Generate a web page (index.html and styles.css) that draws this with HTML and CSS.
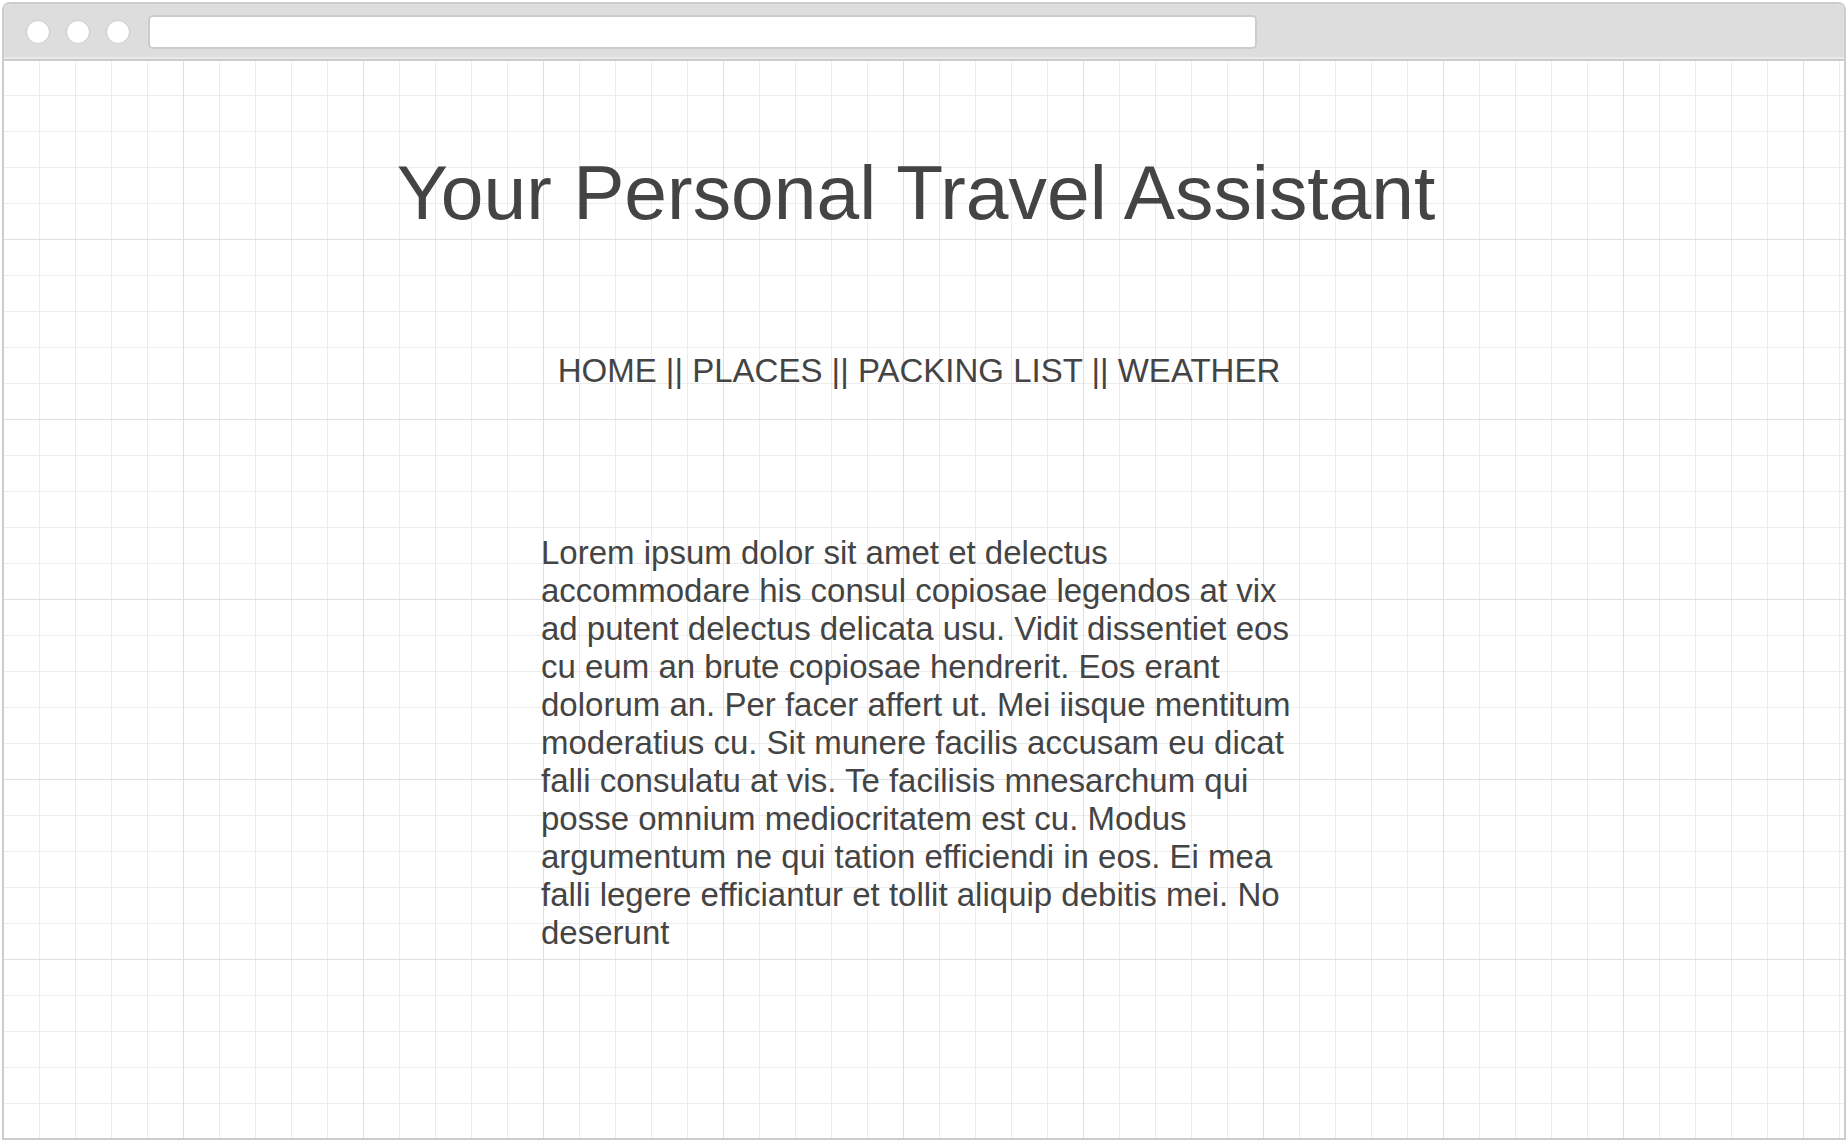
FILE: index.html
```html
<!DOCTYPE html>
<html lang="en">
<head>
<meta charset="utf-8">
<title>Your Personal Travel Assistant</title>
<link rel="stylesheet" href="styles.css">
</head>
<body>
<div class="window">
  <div class="titlebar">
    <span class="dot"></span>
    <span class="dot"></span>
    <span class="dot"></span>
    <div class="address"></div>
  </div>
  <main class="canvas">
    <h1 class="title">Your Personal Travel Assistant</h1>
    <nav class="nav">HOME || PLACES || PACKING LIST || WEATHER</nav>
    <p class="body-text">Lorem ipsum dolor sit amet et delectus accommodare his consul copiosae legendos at vix ad putent delectus delicata usu. Vidit dissentiet eos cu eum an brute copiosae hendrerit. Eos erant dolorum an. Per facer affert ut. Mei iisque mentitum moderatius cu. Sit munere facilis accusam eu dicat falli consulatu at vis. Te facilisis mnesarchum qui posse omnium mediocritatem est cu. Modus argumentum ne qui tation efficiendi in eos. Ei mea falli legere efficiantur et tollit aliquip debitis mei. No deserunt</p>
  </main>
</div>
</body>
</html>
```

FILE: styles.css
```css
html, body {
  margin: 0;
  padding: 0;
  background: #ffffff;
}

body {
  font-family: "Liberation Sans", Arial, sans-serif;
  color: #444444;
}

.window {
  box-sizing: border-box;
  margin: 2px;
  width: 1844px;
  height: 1138px;
  border: 2px solid #cccccc;
  border-radius: 8px 8px 0 0;
  display: flex;
  flex-direction: column;
  overflow: hidden;
}

.titlebar {
  box-sizing: border-box;
  height: 55px;
  padding: 3px 0 0 22px;
  background: #dddddd;
  border-bottom: 2px solid #e9e9e9;
  display: flex;
  align-items: center;
  flex-shrink: 0;
}

.dot {
  box-sizing: border-box;
  width: 24px;
  height: 24px;
  border-radius: 50%;
  background: #ffffff;
  border: 1.5px solid #cacaca;
  margin-right: 16px;
  flex-shrink: 0;
}

.dot:nth-child(3) {
  margin-right: 18px;
}

.address {
  box-sizing: border-box;
  width: 1109px;
  height: 34px;
  background: #ffffff;
  border: 2px solid #cccccc;
  border-radius: 5px;
}

.canvas {
  flex: 1;
  border-top: 2px solid #cccccc;
  display: flex;
  flex-direction: column;
  align-items: center;
  background-color: #ffffff;
  background-image:
    linear-gradient(to right, #dfdfdf 1px, transparent 1px),
    linear-gradient(to bottom, #dfdfdf 1px, transparent 1px),
    linear-gradient(to right, #ececec 1px, transparent 1px),
    linear-gradient(to bottom, #ececec 1px, transparent 1px);
  background-size: 180px 180px, 180px 180px, 36px 36px, 36px 36px;
  background-position: 179px 0, 0 178px, 35px 0, 0 34px;
}

.title {
  margin: 88px 16px 0 0;
  font-size: 76.8px;
  line-height: 86px;
  font-weight: normal;
  white-space: nowrap;
}

.nav {
  margin: 117px 10px 0 0;
  font-size: 33px;
  line-height: 38px;
  white-space: nowrap;
}

.body-text {
  margin: 144px 0 0;
  width: 766px;
  font-size: 33px;
  line-height: 38px;
}
```
